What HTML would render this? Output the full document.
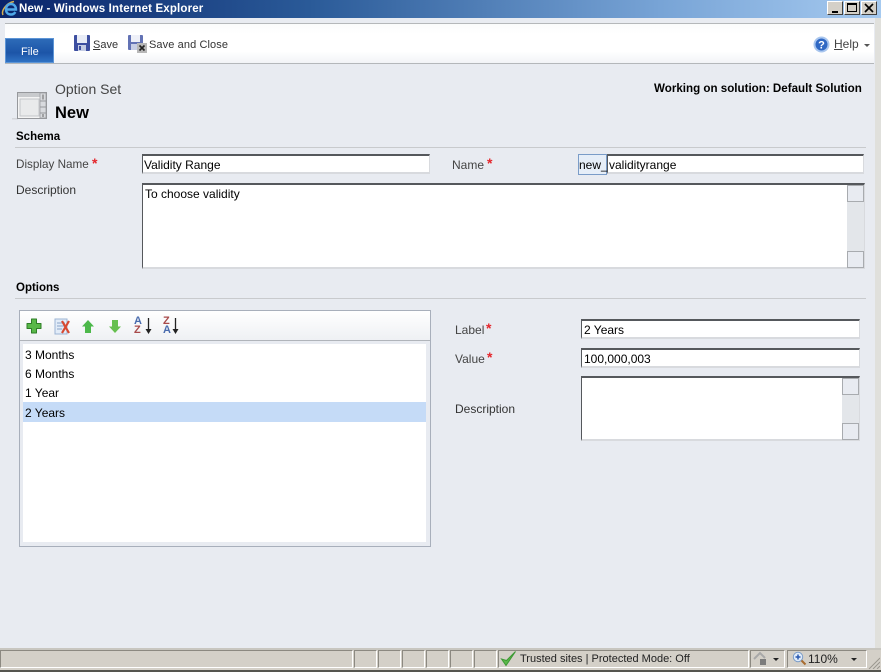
<!DOCTYPE html>
<html><head><meta charset="utf-8"><title>New - Windows Internet Explorer</title>
<style>
html,body{margin:0;padding:0;width:881px;height:672px;overflow:hidden;background:#e8ebf1;font-family:"Liberation Sans",sans-serif;font-size:12px;color:#000}
.a{position:absolute}
.t{position:absolute;white-space:nowrap;line-height:14px;letter-spacing:0}
.g{color:#444}
.star{position:absolute;color:#e4252b;font-size:14px;line-height:14px;font-weight:bold}
.inp{position:absolute;background:#fff;box-sizing:border-box;border:2px solid #d8dade;border-top-color:#55585c;border-left-color:#55585c;border-left-width:1px;border-right-width:1px}
.sb{position:absolute;background:#e3e6ea}
.sb i{position:absolute;left:0;width:17px;height:17px;box-sizing:border-box;border:1px solid #a8abaf;background:#e8ebf1}
.hr{position:absolute;height:1px;background:#c8cacd}
.cell{position:absolute;top:650px;height:18px;box-sizing:border-box;border-left:1px solid #8c8981;border-top:1px solid #8c8981;border-right:1px solid #fff;border-bottom:1px solid #fff;background:#d4d0c8}
</style></head><body>
<!-- title bar -->
<div class="a" style="left:0;top:0;width:881px;height:18px;background:linear-gradient(90deg,#0a246a 0%,#2a5a98 35%,#78a4d6 75%,#a6caf0 100%)"></div>
<svg class="a" style="left:1px;top:0" width="18" height="18" viewBox="0 0 18 18"><path d="M2 15C0 11 5 3 13 1.500" fill="none" stroke="#d8b050" stroke-width="1.500"/><path d="M5 9.500h10C15 6 12.500 4 10 4 7 4 5 6.500 5 9.500c0 3 2 5 5 5 2 0 3.500-1 4.300-2.500" fill="none" stroke="#4fa8e8" stroke-width="2.400"/></svg>
<div class="t" style="left:19px;top:2px;color:#fff;font-weight:bold;font-size:11.500px;letter-spacing:.16px">New - Windows Internet Explorer</div>
<div class="a" style="left:827px;top:1px;width:16px;height:14px;box-sizing:border-box;background:#d4d0c8;border:1px solid;border-color:#fff #404040 #404040 #fff"><div class="a" style="left:4px;top:9px;width:6px;height:2px;background:#000"></div></div>
<div class="a" style="left:844px;top:1px;width:16px;height:14px;box-sizing:border-box;background:#d4d0c8;border:1px solid;border-color:#fff #404040 #404040 #fff"><div class="a" style="left:2px;top:1px;width:10px;height:9px;box-sizing:border-box;border:1px solid #000;border-top-width:2px"></div></div>
<div class="a" style="left:861px;top:1px;width:16px;height:14px;box-sizing:border-box;background:#d4d0c8;border:1px solid;border-color:#fff #404040 #404040 #fff"><svg class="a" style="left:2px;top:1px" width="10" height="10"><path d="M1 1l8 8M9 1l-8 8" stroke="#000" stroke-width="1.700"/></svg></div>
<!-- window side -->
<div class="a" style="left:875px;top:18px;width:6px;height:632px;background:#e0e0dc"></div>
<!-- ribbon -->
<div class="a" style="left:5px;top:23px;width:869px;height:41px;background:linear-gradient(#fafbfc,#fff 25%,#fff 70%,#f2f4f7);border-top:1px solid #b4b7ba;border-bottom:1px solid #b4b7ba;box-sizing:border-box"></div>
<div class="a" style="left:5px;top:38px;width:49px;height:25px;box-sizing:border-box;border:1px solid #5d95d6;background:linear-gradient(#2d6bb8,#1c55a8 60%,#2f72c4)"></div>
<div class="t" style="left:21px;top:45px;color:#fff;font-size:11px">File</div>
<svg class="a" style="left:74px;top:35px" width="16" height="17" viewBox="0 0 16 17"><rect width="16" height="16" rx="1" fill="#3d4fa0"/><rect x="3" y="0" width="10" height="8" fill="#e8ecf6"/><rect x="4" y="10" width="8" height="6" fill="#c4cce4"/><rect x="5" y="11" width="2" height="4" fill="#3d4fa0"/></svg>
<div class="t" style="left:93px;top:38px;color:#333;font-size:11px"><u>S</u>ave</div>
<svg class="a" style="left:128px;top:35px" width="19" height="18" viewBox="0 0 19 18"><rect width="15" height="15" rx="1" fill="#6272b4"/><rect x="3" y="0" width="9" height="7" fill="#eef0f8"/><rect x="3" y="9" width="8" height="6" fill="#c8cfe6"/><rect x="9" y="8" width="10" height="10" fill="#b8b8b8"/><path d="M11.500 10.500l5 5M16.500 10.500l-5 5" stroke="#222" stroke-width="1.600"/></svg>
<div class="t" style="left:149px;top:38px;color:#333;font-size:11px;letter-spacing:.1px">Save and Close</div>
<svg class="a" style="left:813px;top:36px" width="17" height="17" viewBox="0 0 17 17"><circle cx="8.500" cy="8.500" r="8" fill="#a9c6ee"/><circle cx="8.500" cy="8.500" r="6" fill="#2f68c4"/><text x="8.500" y="12.500" text-anchor="middle" font-family="Liberation Sans" font-size="11" font-weight="bold" fill="#fff">?</text></svg>
<div class="t" style="left:834px;top:37px;color:#444"><u>H</u>elp</div>
<div class="a" style="left:864px;top:44px;border:3px solid transparent;border-top:3px solid #555"></div>
<!-- header -->
<svg class="a" style="left:12px;top:89px" width="38" height="32" viewBox="0 0 38 32"><path d="M0 29h6v1.500H0z" fill="#d4d6da"/><rect x="5.500" y="3.500" width="29" height="26" fill="#f4f4f4" stroke="#96989c"/><rect x="6" y="4" width="28" height="4" fill="#c8cacd"/><rect x="8" y="10" width="19" height="17" fill="#e9eaeb" stroke="#c4c6ca"/><rect x="28" y="4" width="6" height="25" fill="#d8dade" stroke="#96989c" stroke-width=".7"/><path d="M28 12h6M28 18h6M28 24h6" stroke="#96989c"/><path d="M31 5.500v5M31 25v3" stroke="#666"/></svg>
<div class="t" style="left:55px;top:81px;font-size:14px;color:#444;line-height:16px">Option Set</div>
<div class="t" style="left:55px;top:104px;font-size:16.500px;font-weight:bold;line-height:18px">New</div>
<div class="t" style="left:654px;top:82px;font-weight:bold;font-size:11.600px">Working on solution: Default Solution</div>
<!-- schema -->
<div class="t" style="left:16px;top:130px;font-weight:bold;font-size:11.500px">Schema</div>
<div class="hr" style="left:15px;top:147px;width:851px"></div>
<div class="t g" style="left:16px;top:158px;font-size:11.700px">Display Name</div><div class="star" style="left:92px;top:156px">*</div>
<div class="inp" style="left:142px;top:154px;width:288px;height:20px"></div>
<div class="t" style="left:144px;top:158px">Validity Range</div>
<div class="t g" style="left:452px;top:158px">Name</div><div class="star" style="left:487px;top:156px">*</div>
<div class="a" style="left:578px;top:154px;width:29px;height:21px;box-sizing:border-box;background:#e6eef8;border:1px solid #7a9cc8"></div>
<div class="t" style="left:579px;top:158px">new_</div>
<div class="inp" style="left:607px;top:154px;width:257px;height:20px"></div>
<div class="t" style="left:609px;top:158px">validityrange</div>
<div class="t" style="left:16px;top:183px;color:#333">Description</div>
<div class="inp" style="left:142px;top:183px;width:723px;height:86px"></div>
<div class="t" style="left:145px;top:187px">To choose validity</div>
<div class="sb" style="left:847px;top:185px;width:17px;height:83px"><i style="top:0"></i><i style="bottom:0"></i></div>
<!-- options -->
<div class="t" style="left:16px;top:281px;font-weight:bold;font-size:11.500px">Options</div>
<div class="hr" style="left:15px;top:298px;width:851px"></div>
<!-- list box -->
<div class="a" style="left:19px;top:310px;width:412px;height:237px;box-sizing:border-box;border:1px solid #a8afbb;background:#e8ebf1"></div>
<div class="a" style="left:20px;top:311px;width:410px;height:30px;background:linear-gradient(#fff,#eef0f3)"></div>
<div class="a" style="left:20px;top:340px;width:410px;height:1px;background:#b0b4ba"></div>
<div class="a" style="left:23px;top:344px;width:403px;height:198px;background:#fff"></div>
<div class="a" style="left:23px;top:402px;width:403px;height:20px;background:#c5dbf7"></div>
<svg class="a" style="left:26px;top:318px" width="16" height="16" viewBox="0 0 16 16"><path d="M5.500 1h5v4.500H15v5h-4.500V15h-5v-4.500H1v-5h4.500z" fill="#58b848" stroke="#2f7e28" stroke-linejoin="round"/></svg>
<svg class="a" style="left:54px;top:318px" width="17" height="17" viewBox="0 0 17 17"><rect x="1" y="1" width="12" height="15" fill="#e2ecf8" stroke="#9cb4d4"/><path d="M3 5h8M3 8h7M3 11h5" stroke="#8aa4c8"/><path d="M8 3l7 12M15 3L8 15" stroke="#d84a32" stroke-width="2.200"/></svg>
<svg class="a" style="left:82px;top:320px" width="12" height="13" viewBox="0 0 12 13"><path d="M6 0l6 6.500H9V13H3V6.500H0z" fill="#4cb84a"/></svg>
<svg class="a" style="left:109px;top:320px" width="12" height="13" viewBox="0 0 12 13"><path d="M3 0h6v6.500h3L6 13 0 6.500h3z" fill="#66c050"/></svg>
<div class="t" style="left:134px;top:317px;font:bold 11px/9px 'Liberation Sans',sans-serif;color:#4a6cae">A<br><span style="color:#a84a4a">Z</span></div>
<svg class="a" style="left:144px;top:318px" width="9" height="17" viewBox="0 0 9 17"><path d="M4.500 0v13" stroke="#222" stroke-width="1.300"/><path d="M1.500 11h6l-3 5z" fill="#222"/></svg>
<div class="t" style="left:163px;top:317px;font:bold 11px/9px 'Liberation Sans',sans-serif;color:#a84a4a">Z<br><span style="color:#4a6cae">A</span></div>
<svg class="a" style="left:171px;top:318px" width="9" height="17" viewBox="0 0 9 17"><path d="M4.500 0v13" stroke="#222" stroke-width="1.300"/><path d="M1.500 11h6l-3 5z" fill="#222"/></svg>
<div class="t" style="left:25px;top:348px">3 Months</div>
<div class="t" style="left:25px;top:367px">6 Months</div>
<div class="t" style="left:25px;top:386px">1 Year</div>
<div class="t" style="left:25px;top:406px">2 Years</div>
<!-- right -->
<div class="t g" style="left:455px;top:323px">Label</div><div class="star" style="left:486px;top:321px">*</div>
<div class="inp" style="left:581px;top:319px;width:279px;height:20px"></div>
<div class="t" style="left:584px;top:323px">2 Years</div>
<div class="t g" style="left:455px;top:352px">Value</div><div class="star" style="left:487px;top:350px">*</div>
<div class="inp" style="left:581px;top:348px;width:279px;height:20px"></div>
<div class="t" style="left:584px;top:352px">100,000,003</div>
<div class="t" style="left:455px;top:402px;color:#333">Description</div>
<div class="inp" style="left:581px;top:376px;width:279px;height:65px"></div>
<div class="sb" style="left:842px;top:378px;width:17px;height:62px"><i style="top:0"></i><i style="bottom:0"></i></div>
<!-- status bar -->
<div class="a" style="left:0;top:648px;width:881px;height:24px;background:#d4d0c8"></div>
<div class="a" style="left:0;top:648px;width:881px;height:2px;background:#c8c6c0"></div>
<div class="a" style="left:0;top:670px;width:881px;height:2px;background:#55554f"></div>
<div class="cell" style="left:0;width:353px"></div>
<div class="cell" style="left:354px;width:23px"></div>
<div class="cell" style="left:378px;width:23px"></div>
<div class="cell" style="left:402px;width:23px"></div>
<div class="cell" style="left:426px;width:23px"></div>
<div class="cell" style="left:450px;width:23px"></div>
<div class="cell" style="left:474px;width:23px"></div>
<div class="cell" style="left:498px;width:251px"></div>
<div class="cell" style="left:750px;width:35px"></div>
<div class="cell" style="left:787px;width:80px"></div>
<svg class="a" style="left:500px;top:650px" width="17" height="17" viewBox="0 0 17 17"><path d="M1.500 9l4.500 6.500L15.500 1.500 6.500 10.500z" fill="#5cb84a" stroke="#3c9a34" stroke-width="1"/></svg>
<div class="t" style="left:520px;top:652px;color:#222;font-size:11px">Trusted sites | Protected Mode: Off</div>
<svg class="a" style="left:753px;top:651px" width="16" height="15" viewBox="0 0 16 15"><path d="M1 8l6-6 5 5" fill="none" stroke="#a8a8a8" stroke-width="2"/><rect x="7" y="8" width="6" height="6" fill="#7c7c7c"/></svg>
<div class="a" style="left:773px;top:658px;border:3px solid transparent;border-top:3px solid #222"></div>
<svg class="a" style="left:792px;top:651px" width="15" height="15" viewBox="0 0 15 15"><circle cx="6" cy="6" r="4.700" fill="#e0ecfa" stroke="#7a9cc8"/><path d="M3.500 6h5M6 3.500v5" stroke="#2858b0" stroke-width="1.500"/><path d="M9.500 9.500l4 4" stroke="#a86c30" stroke-width="2"/></svg>
<div class="t" style="left:808px;top:652px;color:#222">110%</div>
<div class="a" style="left:851px;top:658px;border:3px solid transparent;border-top:3px solid #222"></div>
<svg class="a" style="left:868px;top:657px" width="12" height="12"><path d="M1 12L12 1M5 12l7-7M9 12l3-3" stroke="#9a978f"/></svg>
</body></html>
